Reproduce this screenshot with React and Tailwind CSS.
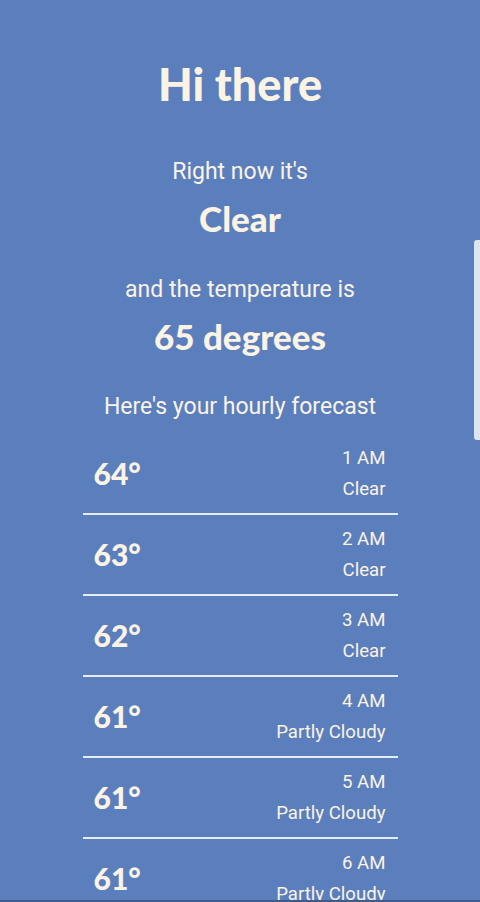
import React from "react";

const rows = [
  ["64°", "1 AM", "Clear"],
  ["63°", "2 AM", "Clear"],
  ["62°", "3 AM", "Clear"],
  ["61°", "4 AM", "Partly Cloudy"],
  ["61°", "5 AM", "Partly Cloudy"],
  ["61°", "6 AM", "Partly Cloudy"],
];

export default function App() {
  return (
    <div className="relative w-[480px] h-[902px] overflow-hidden bg-[#5b7fbc] text-[#fbf3e4] font-['Roboto',sans-serif]">
      <div className="flex flex-col items-center">
        <h1 className="mt-[56px] h-[56px] leading-[56px] text-[45px] font-black font-['Lato',sans-serif]">Hi there</h1>
        <p className="mt-[44px] text-[23px] leading-[32px]">Right now it's</p>
        <p className="mt-[14px] text-[35px] leading-[32px] font-black font-['Lato',sans-serif]">Clear</p>
        <p className="mt-[40px] text-[23px] leading-[32px]">and the temperature is</p>
        <p className="mt-[14px] text-[35px] leading-[32px] font-black font-['Lato',sans-serif]">65 degrees</p>
        <p className="mt-[39px] text-[23px] leading-[32px]">Here's your hourly forecast</p>
        <div className="mt-[11px] w-[315px]">
          {rows.map(([t, h, c], i) => (
            <div key={i} className="flex items-center justify-between h-[81px] pl-[11px] pr-3 border-b-2 border-[#e6ecf6]">
              <span className="text-[30px] font-black font-['Lato',sans-serif]">{t}</span>
              <div className="flex flex-col items-end text-[18.6px] leading-[31px]">
                <span>{h}</span>
                <span>{c}</span>
              </div>
            </div>
          ))}
        </div>
      </div>
      <div className="absolute right-0 top-[240px] w-[6px] h-[200px] rounded-l-[3px] bg-[#dfe5f0]" />
      <div className="absolute left-0 bottom-0 w-full h-[2px] bg-[#3f5b8a]" />
    </div>
  );
}
